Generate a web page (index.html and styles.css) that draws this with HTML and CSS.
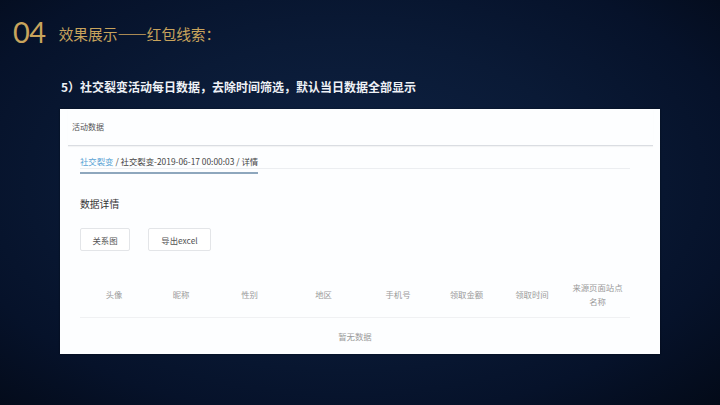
FILE: index.html
```html
<!DOCTYPE html>
<html lang="zh-CN">
<head>
    <meta charset="UTF-8">
    <meta name="viewport" content="width=device-width, initial-scale=1.0">
    <title>效果展示——红包线索</title>
    <link rel="stylesheet" href="styles.css">
</head>
<body>
    <div class="slide">
        <div class="slide-title">
            <span class="slide-num">04</span>
            <span class="slide-name">效果展示——红包线索：</span>
        </div>
        <div class="slide-sub">5）社交裂变活动每日数据，去除时间筛选，默认当日数据全部显示</div>

        <div class="panel">
            <div class="panel-head">活动数据</div>
            <div class="panel-body">
                <div class="crumb-bar">
                    <div class="crumb">
                        <span class="crumb-link">社交裂变</span> / 社交裂变-2019-06-17 00:00:03 / 详情
                    </div>
                </div>

                <div class="section-title">数据详情</div>

                <div class="btn-row">
                    <button class="btn btn-graph">关系图</button>
                    <button class="btn btn-export">导出excel</button>
                </div>

                <div class="table">
                    <div class="table-head">
                        <div class="cell">头像</div>
                        <div class="cell">昵称</div>
                        <div class="cell">性别</div>
                        <div class="cell">地区</div>
                        <div class="cell">手机号</div>
                        <div class="cell">领取金额</div>
                        <div class="cell">领取时间</div>
                        <div class="cell">来源页面站点名称</div>
                    </div>
                    <div class="table-empty">暂无数据</div>
                </div>
            </div>
        </div>
    </div>
</body>
</html>
```

FILE: styles.css
```css
body {
    margin: 0;
    padding: 0;
    font-family: "Noto Sans CJK SC", "Noto Sans", sans-serif;
    background-color: #061126;
}

.slide {
    width: 720px;
    height: 405px;
    overflow: hidden;
    background: radial-gradient(ellipse at 48% 45%, #0f2344 0%, #0a1a36 45%, #06122a 75%, #030a18 100%);
}

.slide-title {
    display: flex;
    align-items: baseline;
    padding: 14px 0 0 13px;
    height: 40px;
    color: #c8a45c;
}

.slide-num {
    font-family: Lato, "Liberation Sans", sans-serif;
    font-weight: 400;
    font-size: 29px;
    letter-spacing: -0.5px;
    margin-right: 13px;
}

.slide-name {
    font-size: 14.7px;
    position: relative;
    top: -3px;
}

.slide-sub {
    margin: 26px 0 0 61px;
    height: 20px;
    color: #eef1f6;
    font-size: 12px;
    font-weight: bold;
    line-height: 14px;
}

.panel {
    margin: 9px 0 0 60px;
    width: 600px;
    height: 245px;
    background-color: #fdfeff;
    box-shadow: 0 0 2px rgba(0, 0, 0, 0.4);
}

.panel-head {
    height: 36px;
    line-height: 36px;
    font-size: 8px;
    color: #555;
    margin: 0 7px 0 8px;
    padding-left: 4px;
    border-bottom: 1px solid #dadde2;
    box-shadow: 0 1px 1px rgba(0, 0, 0, 0.04);
}

.panel-body {
    padding: 0 30px 0 20px;
}

.crumb-bar {
    height: 22px;
    border-bottom: 1px solid #eceef1;
}

.crumb {
    display: inline-block;
    height: 21px;
    line-height: 20px;
    font-size: 8.4px;
    color: #444;
    border-bottom: 2px solid #8ea7bd;
}

.crumb-link {
    color: #58a2d4;
}

.section-title {
    margin-top: 28px;
    font-size: 9.8px;
    color: #333;
    line-height: 14px;
}

.btn-row {
    display: flex;
    gap: 18px;
    margin-top: 17px;
}

.btn {
    height: 23px;
    padding: 0;
    border: 1px solid #e3e5e8;
    border-radius: 2px;
    background-color: #fff;
    font-family: "Noto Sans CJK SC", "Noto Sans", sans-serif;
    font-size: 8.4px;
    color: #555;
}

.btn-graph {
    width: 50px;
}

.btn-export {
    width: 63px;
}

.table {
    margin-top: 20px;
    width: 550px;
}

.table-head {
    display: grid;
    grid-template-columns: 68px 66px 71px 77px 72px 65px 66px 65px;
    align-items: center;
    height: 46px;
    border-bottom: 1px solid #f0f1f3;
}

.cell {
    text-align: center;
    font-size: 8.4px;
    line-height: 14px;
    color: #9a9a9a;
    padding: 0 4px;
}

.table-empty {
    height: 36px;
    line-height: 36px;
    text-align: center;
    font-size: 8.4px;
    color: #9a9a9a;
}
```
